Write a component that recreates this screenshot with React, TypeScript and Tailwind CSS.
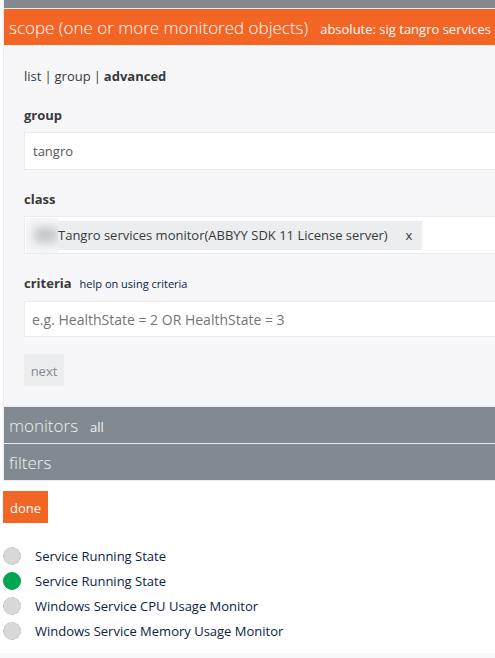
import React from "react";

const monitors = [
  { name: "Service Running State", healthy: false },
  { name: "Service Running State", healthy: true },
  { name: "Windows Service CPU Usage Monitor", healthy: false },
  { name: "Windows Service Memory Usage Monitor", healthy: false },
];

function SectionBar({ title, detail, active = false }: { title: string; detail?: string; active?: boolean }) {
  return (
    <button
      type="button"
      className={
        "flex h-9 w-full items-baseline gap-3 overflow-hidden px-[5px] pt-[5px] text-left whitespace-nowrap " +
        (active ? "bg-[#f36525] text-white" : "bg-[#828990] text-[#f0f1f2]")
      }
    >
      <span className="text-[17px] leading-7 font-light">{title}</span>
      {detail && <span className="text-[13px] leading-7">{detail}</span>}
    </button>
  );
}

export default function App() {
  return (
    <div className="overflow-hidden bg-white pl-[3px] font-['Open_Sans','Noto_Sans',sans-serif] text-[13px] leading-5 text-[#38393b]">
      <div className="border-b border-l border-[#ececee]">
        <div className="h-2 bg-[#828990]" />
        <div className="border-t border-[#ececee]">
          <SectionBar title="scope (one or more monitored objects)" detail="absolute: sig tangro services monitor" active />
        </div>
        <form className="bg-[#f7f7fa] pt-[21px] pb-5 pl-5">
          <div className="flex flex-col gap-[19px]">
            <nav className="flex gap-[3px]">
              <a href="#list">list</a>
              <span>|</span>
              <a href="#group">group</a>
              <span>|</span>
              <a href="#advanced" className="font-bold">advanced</a>
            </nav>
            <div className="flex flex-col gap-[7px]">
              <label htmlFor="group" className="font-bold">group</label>
              <input
                id="group"
                defaultValue="tangro"
                className="h-[38px] w-full border border-r-0 border-[#ececee] bg-white px-2 text-[#555659] outline-none"
              />
            </div>
            <div className="flex flex-col gap-[7px]">
              <span className="font-bold">class</span>
              <div className="flex h-[38px] items-center border border-r-0 border-[#ececee] bg-white pl-px">
                <div className="flex h-[29px] items-center bg-[#ecedef] pr-[10px] whitespace-nowrap">
                  <span className="flex h-[35px] w-8 shrink-0 items-center justify-end overflow-hidden bg-[#f5f6f7]">
                    <span className="h-4 w-6 bg-[#c6c7c9] blur-[5px]" />
                  </span>
                  <span>Tangro services monitor(ABBYY SDK 11 License server)</span>
                  <button type="button" aria-label="remove class" className="ml-[18px]">x</button>
                </div>
              </div>
            </div>
            <div className="flex flex-col gap-[7px]">
              <div className="flex items-baseline gap-2">
                <label htmlFor="criteria" className="font-bold">criteria</label>
                <a href="#help" className="text-[11px] text-[#0b2343]">help on using criteria</a>
              </div>
              <input
                id="criteria"
                placeholder="e.g. HealthState = 2 OR HealthState = 3"
                className="h-9 w-full border border-r-0 border-[#ececee] bg-white px-[7px] text-[14px] outline-none placeholder:text-[#757575]"
              />
            </div>
          </div>
          <button type="button" className="mt-[17px] block h-8 w-10 bg-[#ecedef] pt-0.5 text-[#828990]">next</button>
        </form>
        <div className="flex flex-col gap-px border-t border-[#ececee] bg-[#ececee]">
          <SectionBar title="monitors" detail="all" />
          <SectionBar title="filters" />
        </div>
      </div>
      <button type="button" className="mt-[10px] block h-8 w-[45px] bg-[#f36525] pt-0.5 text-white">done</button>
      <ul className="mt-5 mb-[10px]">
        {monitors.map((m, i) => (
          <li key={i} className="flex h-[25px] items-center gap-[14px]">
            <span
              className={
                "size-[18px] rounded-full border " +
                (m.healthy ? "border-[#00a651] bg-[#00a651]" : "border-dashed border-[#bdbdbd] bg-[#d8d8d8]")
              }
            />
            <a href="#monitor" className="text-[#0b2343]">{m.name}</a>
          </li>
        ))}
      </ul>
      <div className="-ml-[3px] h-[5px] bg-[#f7f8fa]" />
    </div>
  );
}
